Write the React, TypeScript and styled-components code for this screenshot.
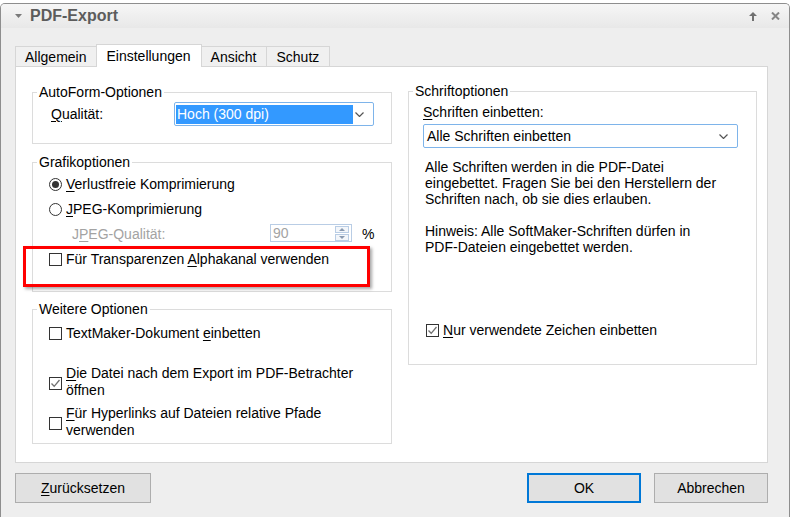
import React from "react";
import styled, { createGlobalStyle } from "styled-components";

const GlobalStyle = createGlobalStyle`
  html, body {
    margin: 0;
    padding: 0;
    background: #ffffff;
  }
  body {
    font-family: "Liberation Sans", Arial, sans-serif;
    font-size: 14px;
    color: #000;
  }
  * {
    box-sizing: border-box;
  }
`;

const Window = styled.div`
  margin-top: 3px;
  width: 790px;
  height: 514px;
  border: 1px solid #8e8e8e;
  border-bottom: none;
  border-radius: 5px 5px 0 0;
  background: #eeeeee;
  overflow: hidden;
`;

const TitleBar = styled.div`
  height: 24px;
  display: flex;
  align-items: center;
  padding: 0 9px 0 14px;
  background: linear-gradient(#f6f6f6, #e8e8e8);
`;

const Caret = styled.svg`
  width: 7px;
  height: 4px;
  fill: #7a7a7a;
`;

const Title = styled.div`
  margin-left: 8px;
  font-size: 16px;
  font-weight: bold;
  color: #5c5c5c;
  flex: 1;
`;

const TitleButtons = styled.div`
  display: flex;
  align-items: center;
  gap: 14px;
`;

const TitleIcon = styled.svg`
  display: block;
`;

const Body = styled.div`
  padding: 16px 21px 0 14px;
`;

const Tabs = styled.div`
  display: flex;
  align-items: flex-end;
  height: 23px;
`;

const Tab = styled.div<{ $active?: boolean }>`
  position: relative;
  z-index: ${(p) => (p.$active ? 2 : 0)};
  height: ${(p) => (p.$active ? 23 : 21)}px;
  padding: 0 10px 0 9px;
  display: flex;
  align-items: center;
  border: 1px solid #d6d6d6;
  border-bottom: none;
  background: ${(p) => (p.$active ? "#ffffff" : "#f0f0f0")};
  & + & {
    margin-left: -1px;
  }
`;

const Panel = styled.div`
  position: relative;
  z-index: 1;
  margin-top: -1px;
  height: 397px;
  border: 1px solid #d6d6d6;
  background: #ffffff;
  display: grid;
  grid-template-columns: 360px 349px;
  column-gap: 16px;
  align-items: start;
  padding: 17px 0 0 16px;
`;

const Column = styled.div<{ $shift?: number }>`
  display: flex;
  flex-direction: column;
  margin-top: ${(p) => p.$shift ?? 0}px;
`;

const Group = styled.fieldset<{ $h: number; $gap?: number }>`
  margin: ${(p) => p.$gap ?? 0}px 0 0;
  padding: 0;
  min-width: 0;
  height: ${(p) => p.$h}px;
  border: 1px solid #dcdcdc;
`;

const Legend = styled.legend`
  margin-left: 4px;
  padding: 0 2px;
  line-height: 16px;
`;

const GroupBody = styled.div<{ $top: number; $left: number }>`
  display: flex;
  flex-direction: column;
  padding: ${(p) => p.$top}px 0 0 ${(p) => p.$left}px;
`;

const Row = styled.div<{ $h?: number; $gap?: number }>`
  position: relative;
  display: flex;
  align-items: center;
  gap: 4px;
  min-height: ${(p) => p.$h ?? 20}px;
  margin-top: ${(p) => p.$gap ?? 0}px;
  line-height: 17px;
`;

const Highlighted = styled(Row)`
  &::after {
    content: "";
    position: absolute;
    left: -26px;
    top: -1px;
    width: 341px;
    height: 35px;
    border: 3px solid #ff0000;
    box-shadow: 2px 2px 3px rgba(0, 0, 0, 0.35);
    pointer-events: none;
  }
`;

const Label = styled.span<{ $w?: number; $muted?: boolean; $indent?: number }>`
  width: ${(p) => (p.$w ? `${p.$w}px` : "auto")};
  flex: none;
  margin-left: ${(p) => p.$indent ?? 0}px;
  color: ${(p) => (p.$muted ? "#a3a3a3" : "#000")};
`;

const Key = styled.span`
  text-decoration: underline;
  text-underline-offset: 2px;
`;

const Lines = styled.span`
  display: flex;
  flex-direction: column;
  margin-top: -3px;
`;

const Select = styled.div<{ $w: number }>`
  width: ${(p) => p.$w}px;
  height: 24px;
  flex: none;
  display: flex;
  align-items: center;
  padding: 0 9px 0 1px;
  border: 1px solid #7eb4ea;
  border-radius: 2px;
  background: #ffffff;
`;

const SelectValue = styled.span<{ $selected?: boolean }>`
  flex: ${(p) => (p.$selected ? "0 0 177px" : "1")};
  height: 19px;
  line-height: 19px;
  padding-left: ${(p) => (p.$selected ? 1 : 2)}px;
  background: ${(p) => (p.$selected ? "#3399ff" : "transparent")};
  color: ${(p) => (p.$selected ? "#ffffff" : "#000")};
`;

const Chevron = styled.svg`
  margin-left: auto;
  width: 9px;
  height: 5px;
  fill: none;
  stroke: #555;
  stroke-width: 1.2;
`;

const Spin = styled.div`
  width: 82px;
  height: 18px;
  flex: none;
  display: flex;
  align-items: center;
  border: 1px solid #b9cde5;
  padding: 0 2px 0 2px;
  color: #a3a3a3;
  margin-top: -3px;
`;

const SpinValue = styled.span`
  flex: 1;
`;

const SpinArrows = styled.div`
  display: flex;
  flex-direction: column;
  gap: 1px;
`;

const SpinArrow = styled.div`
  width: 14px;
  height: 7px;
  border: 1px solid #b9cde5;
  background: #f3f6fa;
  display: flex;
  align-items: center;
  justify-content: center;
`;

const Percent = styled.span`
  margin-left: 6px;
`;

const Box = styled.span<{ $round?: boolean }>`
  width: 13px;
  height: 13px;
  flex: none;
  border: 1px solid #333333;
  border-radius: ${(p) => (p.$round ? "50%" : "0")};
  background: #ffffff;
  display: flex;
  align-items: center;
  justify-content: center;
`;

const Dot = styled.span`
  width: 7px;
  height: 7px;
  border-radius: 50%;
  background: #333333;
`;

const Text = styled.p`
  margin: 11px 0 0 2px;
  line-height: 16px;
`;

const Footer = styled.div`
  display: flex;
  align-items: center;
  margin-top: 10px;
  gap: 13px;
`;

const Button = styled.button<{ $w: number; $default?: boolean }>`
  width: ${(p) => p.$w}px;
  height: 30px;
  font: inherit;
  color: #000;
  background: #e1e1e1;
  border: ${(p) => (p.$default ? "2px solid #0078d7" : "1px solid #adadad")};
  padding: 0;
  &:first-child {
    margin-right: auto;
  }
`;

const Check = ({ checked }: { checked?: boolean }) => (
  <Box>
    {checked && (
      <svg width="11" height="11" viewBox="0 0 11 11">
        <path d="M1.5 5.5 L4.2 8.3 L9.5 2" fill="none" stroke="#707070" strokeWidth="1.3" />
      </svg>
    )}
  </Box>
);

const Radio = ({ checked }: { checked?: boolean }) => (
  <Box $round>{checked && <Dot />}</Box>
);

const Arrow = ({ up }: { up?: boolean }) => (
  <svg width="6" height="3" viewBox="0 0 6 3">
    <path d={up ? "M0 3 L3 0 L6 3 Z" : "M0 0 L3 3 L6 0 Z"} fill="#8a9ab0" />
  </svg>
);

export default function App() {
  return (
    <>
      <GlobalStyle />
      <Window>
        <TitleBar>
          <Caret viewBox="0 0 7 4">
            <path d="M0 0 H7 L3.5 4 Z" />
          </Caret>
          <Title>PDF-Export</Title>
          <TitleButtons>
            <TitleIcon width="8" height="9" viewBox="0 0 8 9">
              <path d="M4 0 L8 4 H5 V9 H3 V4 H0 Z" fill="#707070" />
            </TitleIcon>
            <TitleIcon width="9" height="8" viewBox="0 0 9 8">
              <path d="M1 0.5 L8 7.5 M8 0.5 L1 7.5" stroke="#858585" strokeWidth="2" />
            </TitleIcon>
          </TitleButtons>
        </TitleBar>

        <Body>
          <Tabs>
            <Tab>Allgemein</Tab>
            <Tab $active>Einstellungen</Tab>
            <Tab>Ansicht</Tab>
            <Tab>Schutz</Tab>
          </Tabs>

          <Panel>
            <Column>
              <Group $h={60}>
                <Legend>AutoForm-Optionen</Legend>
                <GroupBody $top={2} $left={18}>
                  <Row $h={24}>
                    <Label $w={119}>
                      <Key>Q</Key>ualität:
                    </Label>
                    <Select $w={200}>
                      <SelectValue $selected>Hoch (300 dpi)</SelectValue>
                      <Chevron viewBox="0 0 9 5">
                        <path d="M0.5 0.5 L4.5 4.5 L8.5 0.5" />
                      </Chevron>
                    </Select>
                  </Row>
                </GroupBody>
              </Group>

              <Group $h={138} $gap={10}>
                <Legend>Grafikoptionen</Legend>
                <GroupBody $top={2} $left={16}>
                  <Row $h={25}>
                    <Radio checked />
                    <Label>
                      <Key>V</Key>erlustfreie Komprimierung
                    </Label>
                  </Row>
                  <Row $h={25}>
                    <Radio />
                    <Label>
                      <Key>J</Key>PEG-Komprimierung
                    </Label>
                  </Row>
                  <Row $h={25}>
                    <Label $muted $w={194} $indent={23}>
                      J<Key>P</Key>EG-Qualität:
                    </Label>
                    <Spin>
                      <SpinValue>90</SpinValue>
                      <SpinArrows>
                        <SpinArrow>
                          <Arrow up />
                        </SpinArrow>
                        <SpinArrow>
                          <Arrow />
                        </SpinArrow>
                      </SpinArrows>
                    </Spin>
                    <Percent>%</Percent>
                  </Row>
                  <Highlighted $h={25}>
                    <Check />
                    <Label>
                      Für Transparenzen <Key>A</Key>lphakanal verwenden
                    </Label>
                  </Highlighted>
                </GroupBody>
              </Group>

              <Group $h={143} $gap={9}>
                <Legend>Weitere Optionen</Legend>
                <GroupBody $top={4} $left={16}>
                  <Row $h={24}>
                    <Check />
                    <Label>
                      TextMaker-Dokument <Key>e</Key>inbetten
                    </Label>
                  </Row>
                  <Row $gap={23}>
                    <Check checked />
                    <Lines>
                      <span>
                        <Key>D</Key>ie Datei nach dem Export im PDF-Betrachter
                      </span>
                      <span>öffnen</span>
                    </Lines>
                  </Row>
                  <Row $gap={9}>
                    <Check />
                    <Lines>
                      <span>
                        <Key>F</Key>ür Hyperlinks auf Dateien relative Pfade
                      </span>
                      <span>verwenden</span>
                    </Lines>
                  </Row>
                </GroupBody>
              </Group>
            </Column>

            <Column $shift={-1}>
              <Group $h={282}>
                <Legend>Schriftoptionen</Legend>
                <GroupBody $top={5} $left={14}>
                  <Label>
                    <Key>S</Key>chriften einbetten:
                  </Label>
                  <Row $gap={4}>
                    <Select $w={315}>
                      <SelectValue>Alle Schriften einbetten</SelectValue>
                      <Chevron viewBox="0 0 9 5">
                        <path d="M0.5 0.5 L4.5 4.5 L8.5 0.5" />
                      </Chevron>
                    </Select>
                  </Row>
                  <Text>
                    Alle Schriften werden in die PDF-Datei
                    <br />
                    eingebettet. Fragen Sie bei den Herstellern der
                    <br />
                    Schriften nach, ob sie dies erlauben.
                    <br />
                    <br />
                    Hinweis: Alle SoftMaker-Schriften dürfen in
                    <br />
                    PDF-Dateien eingebettet werden.
                  </Text>
                  <Row $gap={65}>
                    <Label $indent={3}>
                      <Check checked />
                    </Label>
                    <Label>
                      <Key>N</Key>ur verwendete Zeichen einbetten
                    </Label>
                  </Row>
                </GroupBody>
              </Group>
            </Column>
          </Panel>

          <Footer>
            <Button $w={136}>
              <Key>Z</Key>urücksetzen
            </Button>
            <Button $w={114} $default>
              OK
            </Button>
            <Button $w={114}>Abbrechen</Button>
          </Footer>
        </Body>
      </Window>
    </>
  );
}
